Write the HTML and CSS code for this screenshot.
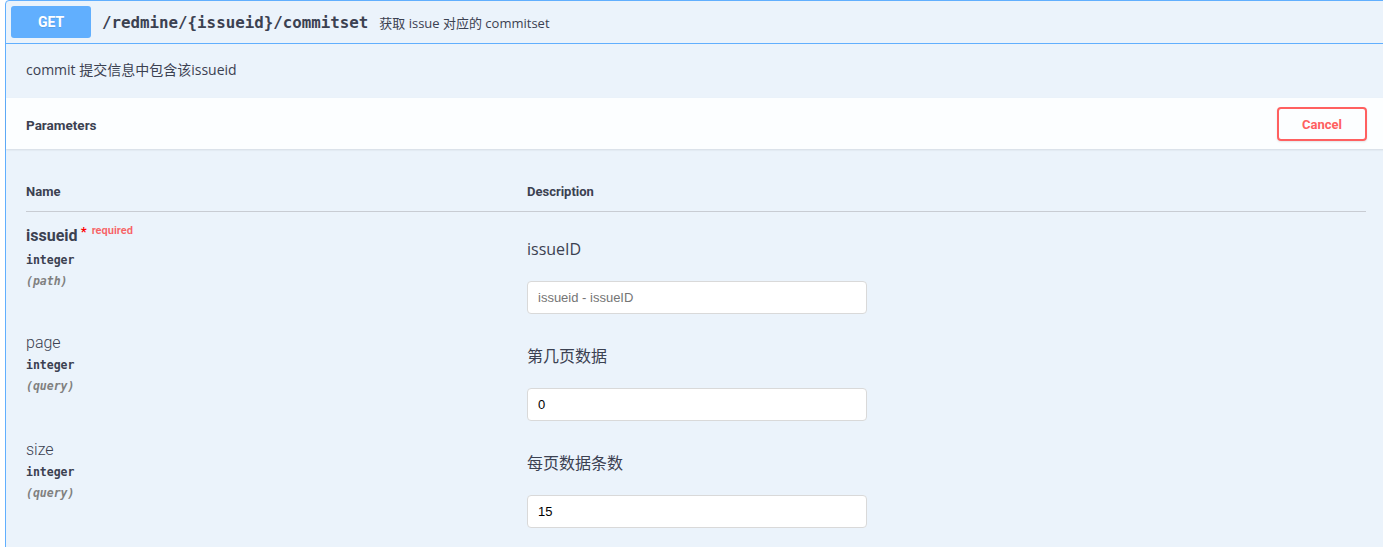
FILE: index.html
```html
<!DOCTYPE html>
<html lang="zh">
<head>
<meta charset="utf-8">
<title>redmine commitset</title>
<link rel="stylesheet" href="styles.css">
</head>
<body>
<div class="opblock">
  <div class="summary">
    <span class="method">GET</span>
    <span class="path">/redmine/{issueid}/commitset</span>
    <span class="summary-desc">获取 issue 对应的 commitset</span>
  </div>
  <div class="op-desc">commit 提交信息中包含该issueid</div>
  <div class="section-header">
    <h4 class="section-title">Parameters</h4>
    <button class="cancel">Cancel</button>
  </div>
  <div class="table-container">
    <div class="params-head">
      <div class="col-name">Name</div>
      <div class="col-desc">Description</div>
    </div>
    <div class="param-row">
      <div class="col-name">
        <div class="param-name required">issueid<span class="star">&nbsp;*</span><span class="req">required</span></div>
        <div class="param-type">integer</div>
        <div class="param-in">(path)</div>
      </div>
      <div class="col-desc">
        <p class="param-desc">issueID</p>
        <input class="param-input" type="text" placeholder="issueid - issueID">
      </div>
    </div>
    <div class="param-row">
      <div class="col-name">
        <div class="param-name">page</div>
        <div class="param-type">integer</div>
        <div class="param-in">(query)</div>
      </div>
      <div class="col-desc">
        <p class="param-desc">第几页数据</p>
        <input class="param-input" type="text" value="0">
      </div>
    </div>
    <div class="param-row">
      <div class="col-name">
        <div class="param-name">size</div>
        <div class="param-type">integer</div>
        <div class="param-in">(query)</div>
      </div>
      <div class="col-desc">
        <p class="param-desc">每页数据条数</p>
        <input class="param-input" type="text" value="15">
      </div>
    </div>
  </div>
</div>
</body>
</html>
```

FILE: styles.css
```css
html, body {
  margin: 0;
  padding: 0;
  background: #ffffff;
  overflow: hidden;
}
body {
  font-family: "Open Sans", "Noto Sans CJK SC", sans-serif;
  color: #3b4151;
  width: 1383px;
  height: 547px;
}
.opblock {
  box-sizing: border-box;
  margin-left: 5px;
  width: 1382px;
  height: 560px;
  border: 1px solid #61affe;
  border-radius: 4px;
  background: #ebf3fb;
}
.summary {
  display: flex;
  align-items: center;
  padding: 5px;
  border-bottom: 1px solid #61affe;
  height: 32px;
}
.method {
  box-sizing: border-box;
  width: 80px;
  height: 32px;
  line-height: 32px;
  border-radius: 3px;
  background: #61affe;
  color: #ffffff;
  text-align: center;
  font-family: "Roboto", sans-serif;
  font-weight: 700;
  font-size: 14px;
  text-shadow: 0 1px 0 rgba(0,0,0,.1);
}
.path {
  padding: 0 11px 0 11px;
  font-family: "DejaVu Sans Mono", monospace;
  font-weight: 700;
  font-size: 15.8px;
  color: #3b4151;
}
.summary-desc {
  font-family: "Open Sans", "Noto Sans CJK SC", sans-serif;
  font-size: 13px;
  color: #3b4151;
}
.op-desc {
  padding: 16px 20px 18px;
  font-size: 14px;
  line-height: 20px;
  color: #3b4151;
}
.section-header {
  display: flex;
  align-items: center;
  justify-content: space-between;
  height: 51px;
  padding: 0 19px 0 20px;
  background: rgba(255,255,255,.85);
  box-shadow: 0 1px 2px rgba(0,0,0,.1);
}
.section-title {
  margin: 0;
  padding-top: 3px;
  font-family: "Roboto", sans-serif;
  font-weight: 700;
  font-size: 13.5px;
  color: #3b4151;
}
.cancel {
  box-sizing: border-box;
  width: 90px;
  height: 34px;
  margin-top: 0;
  padding-top: 3px;
  border: 2px solid #ff6060;
  border-radius: 4px;
  background: transparent;
  color: #ff6060;
  font-family: "Roboto", sans-serif;
  font-weight: 700;
  font-size: 13px;
  box-shadow: 0 1px 2px rgba(0,0,0,.1);
}
.table-container {
  padding: 23px 20px 0 20px;
}
.params-head {
  display: grid;
  grid-template-columns: 501px 1fr;
  padding: 12px 0 12px;
  line-height: 15px;
  border-bottom: 1px solid #c8ccd3;
  font-family: "Roboto", sans-serif;
  font-weight: 700;
  font-size: 13px;
  color: #3b4151;
}
.param-row {
  display: grid;
  grid-template-columns: 501px 1fr;
  padding: 12px 0 0;
}
.param-name {
  padding-top: 1px;
  font-family: "Roboto", sans-serif;
  font-size: 16px;
  line-height: 22px;
  color: #3b4151;
  font-weight: 300;
}
.param-name.required {
  font-weight: 700;
}
.star {
  color: #ff0000;
  font-size: 13px;
  position: relative;
  top: -5px;
}
.req {
  position: relative;
  top: -7px;
  padding-left: 5px;
  font-size: 11px;
  font-weight: 700;
  color: rgba(255,0,0,.6);
}
.param-type {
  font-family: "DejaVu Sans Mono", monospace;
  font-size: 11.5px;
  font-weight: 700;
  line-height: 23px;
  color: #3b4151;
}
.param-in {
  font-family: "DejaVu Sans Mono", monospace;
  font-size: 11.5px;
  font-weight: 700;
  font-style: italic;
  line-height: 18px;
  color: #808080;
}
.col-desc {
  display: flex;
  flex-direction: column;
  align-items: flex-start;
}
.param-desc {
  margin: 14px 0 21px;
  font-size: 16px;
  line-height: 22px;
  color: #3b4151;
}
.param-input {
  box-sizing: border-box;
  width: 340px;
  height: 33px;
  margin: 0 0 5px;
  padding: 7px 10px;
  border: 1px solid #d9d9d9;
  border-radius: 4px;
  background: #ffffff;
  font-family: "Liberation Sans", Arial, sans-serif;
  font-size: 13px;
  color: #000000;
  outline: none;
}
.param-input::placeholder {
  color: #757575;
}
```
